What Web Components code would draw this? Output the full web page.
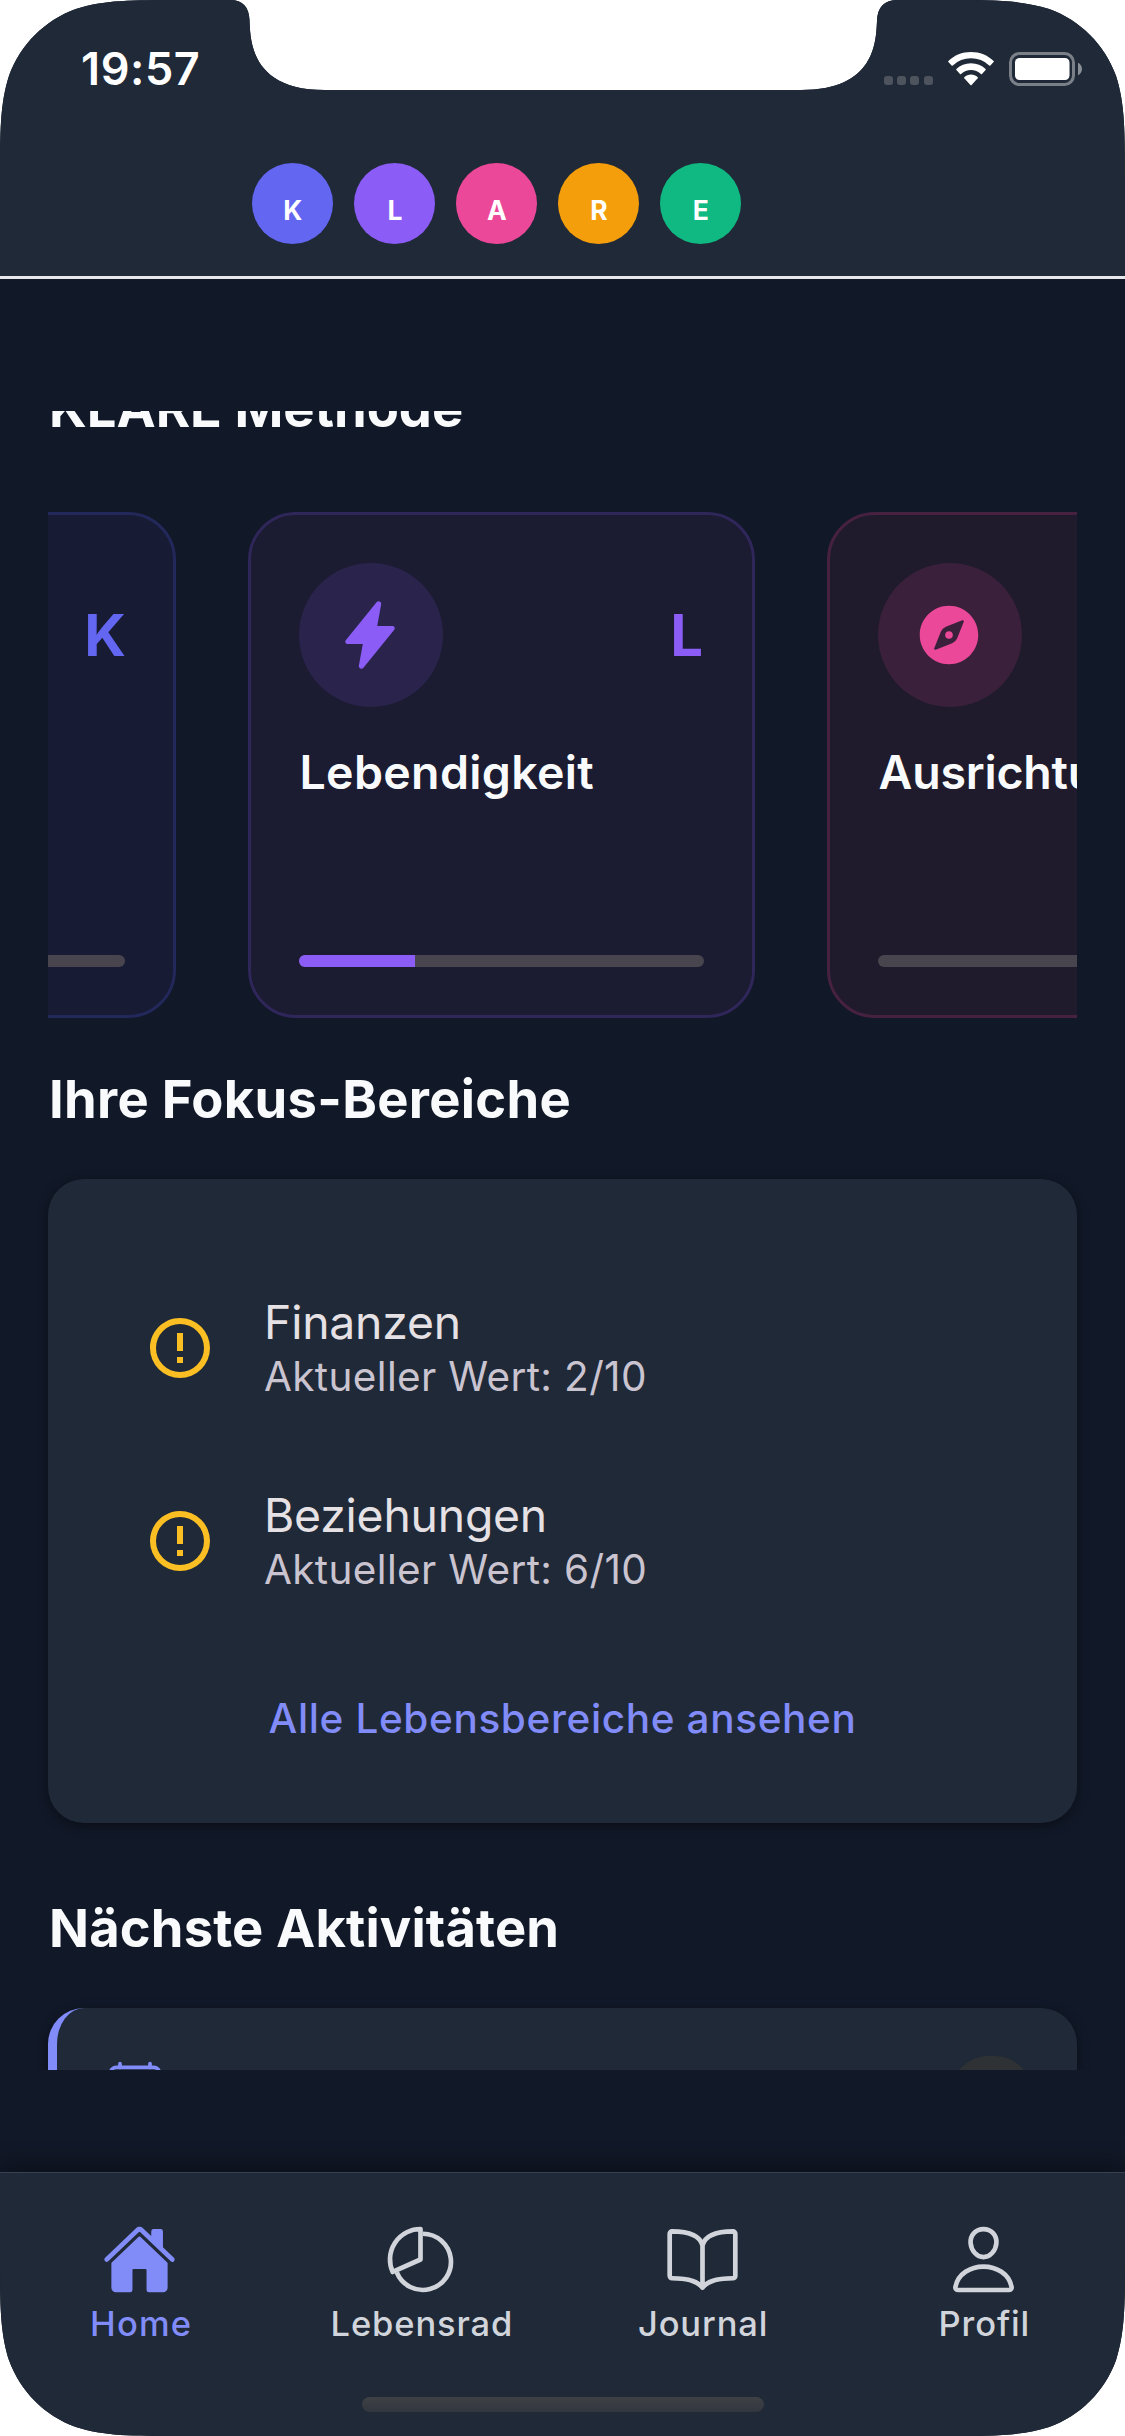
<!DOCTYPE html>
<html lang="de">
<head>
<meta charset="utf-8">
<title>KLARE Methode</title>
<style>
  html, body { margin: 0; background: #fff; }
  body { font-family: Inter, "Liberation Sans", sans-serif; }
</style>
</head>
<body>
<klare-screen>
  <status-bar slot="header" time="19:57"></status-bar>
  <klare-badges slot="header">
    <klare-badge style="--tone:#6366f1">K</klare-badge>
    <klare-badge style="--tone:#8b5cf6">L</klare-badge>
    <klare-badge style="--tone:#ec4899">A</klare-badge>
    <klare-badge style="--tone:#f59e0b">R</klare-badge>
    <klare-badge style="--tone:#10b981">E</klare-badge>
  </klare-badges>

  <section-title style="margin-top:-36px; --track:0">KLARE Methode</section-title>
  <step-carousel>
    <step-card letter="K" icon="none" progress="0" style="--tone:#6366f1; --fill:#171b34; --line:#23285a; --disc:#20254e; --kern:-1px"></step-card>
    <step-card letter="L" icon="flash" progress="28.7" style="--tone:#8b5cf6; --fill:#1b1b32; --line:#2f2659; --disc:#2a244d; --kern:1px">Lebendigkeit</step-card>
    <step-card letter="" icon="compass" progress="0" style="--tone:#ec4899; --fill:#1f1b2c; --line:#462240; --disc:#3a203b; --track:-0.2px">Ausrichtung</step-card>
  </step-carousel>

  <section-title style="margin-top:48px; --track:0.3px">Ihre Fokus-Bereiche</section-title>
  <focus-card>
    <focus-item value="2/10">Finanzen</focus-item>
    <focus-item value="6/10">Beziehungen</focus-item>
    <span slot="action">Alle Lebensbereiche ansehen</span>
  </focus-card>

  <section-title style="margin-top:71.5px; --track:0.15px">Nächste Aktivitäten</section-title>
  <activity-card></activity-card>

  <tab-bar slot="footer">
    <tab-item icon="home" active style="--track:1.2px; --shift:1px">Home</tab-item>
    <tab-item icon="pie">Lebensrad</tab-item>
    <tab-item icon="book">Journal</tab-item>
    <tab-item icon="person">Profil</tab-item>
  </tab-bar>
</klare-screen>

<script>
const define = (name, html, setup) => customElements.define(name, class extends HTMLElement {
  constructor() {
    super();
    const root = this.attachShadow({ mode: 'open' });
    const t = document.createElement('template');
    t.innerHTML = html;
    root.append(t.content.cloneNode(true));
  }
  connectedCallback() { if (setup) setup(this, this.shadowRoot); }
});

const ICONS = {
  none: '',
  flash: '<path d="M194.82 496a18.36 18.36 0 01-18.1-21.53v-.11L204.83 320H96a16 16 0 01-12.44-26.06L302.73 23a18.45 18.45 0 0132.8 13.71c0 .3-.08.59-.13.89L307.19 192H416a16 16 0 0112.44 26.06L209.24 489a18.45 18.45 0 01-14.42 7z"/>',
  compass: '<circle cx="256" cy="256" r="27"/><path fill-rule="evenodd" d="M256 48C141.31 48 48 141.31 48 256s93.31 208 208 208 208-93.31 208-208S370.69 48 256 48zm105.07 113.33l-46.88 117.2a64 64 0 01-35.66 35.66l-117.2 46.88a8 8 0 01-10.4-10.4l46.88-117.2a64 64 0 0135.66-35.66l117.2-46.88a8 8 0 0110.4 10.4z"/>',
  home: '<path d="M261.56 101.28a8 8 0 00-11.06 0L66.4 277.15a8 8 0 00-2.47 5.79L63.9 448a32 32 0 0032 32H192a16 16 0 0016-16V328a8 8 0 018-8h80a8 8 0 018 8v136a16 16 0 0016 16h96.06a32 32 0 0032-32V282.94a8 8 0 00-2.47-5.79z"/><path d="M490.91 244.15l-74.8-71.56V64a16 16 0 00-16-16h-48a16 16 0 00-16 16v32l-57.92-55.38C272.77 35.14 264.71 32 256 32c-8.68 0-16.72 3.14-22.14 8.63l-212.7 203.5c-6.22 6-7 15.87-1.34 22.37A16 16 0 0043 267.56L250.5 69.28a8 8 0 0111.06 0l207.52 198.28a16 16 0 0022.59-.44c6.14-6.36 5.63-16.86-.76-22.97z"/>',
  pie: '<g fill="none" stroke="currentColor" stroke-width="32" stroke-linejoin="round"><path d="M256 256V48a208 208 0 0 0-190 293.2z"/><path d="M272 80a192 192 0 1 1-178 264"/></g>',
  book: '<g fill="none" stroke="currentColor" stroke-width="32" stroke-linecap="round" stroke-linejoin="round"><path d="M256 160c16-63.16 76.43-95.41 208-96a15.94 15.94 0 0116 16v288a16 16 0 01-16 16c-128 0-177.45 25.81-208 64-30.37-38-80-64-208-64-9.88 0-16-8.05-16-17.93V80a15.94 15.94 0 0116-16c131.57.59 192 32.84 208 96zM256 160v288"/></g>',
  person: '<g fill="none" stroke="currentColor" stroke-width="32" stroke-linecap="round" stroke-linejoin="round"><path d="M344 144c-3.92 52.87-44 96-88 96s-84.15-43.12-88-96c-4-55 35-96 88-96s92 42 88 96z"/><path d="M256 304c-87 0-175.3 48-191.64 138.6C62.39 453.52 68.57 464 80 464h352c11.44 0 17.62-10.48 15.65-21.4C431.3 352 343 304 256 304z"/></g>',
  calendar: '<g fill="none" stroke="currentColor" stroke-width="32" stroke-linecap="round" stroke-linejoin="round"><rect x="48" y="80" width="416" height="384" rx="48"/><path d="M128 48v32M384 48v32M464 160H48"/></g>',
  alert: '<g transform="scale(21.333)"><path d="M11 15h2v2h-2v-2m0-8h2v6h-2V7m1-5C6.47 2 2 6.5 2 12a10 10 0 0 0 10 10 10 10 0 0 0 10-10A10 10 0 0 0 12 2m0 18a8 8 0 0 1-8-8 8 8 0 0 1 8-8 8 8 0 0 1 8 8 8 8 0 0 1-8 8z"/></g>'
};

define('app-icon', `
  <style>:host{display:block;flex:none} svg{display:block;width:100%;height:100%}</style>
  <svg viewBox="0 0 512 512" fill="currentColor"></svg>`,
  (el, root) => { root.querySelector('svg').innerHTML = ICONS[el.getAttribute('name')] || ''; });

define('klare-screen', `
  <style>
    :host{display:flex;flex-direction:column;width:1125px;height:2436px;background:#111827;overflow:hidden;
      clip-path:path('M0 183.4 C0 130.6 0 104.2 9 75.8 C20.3 44.7 44.7 20.3 75.8 9 C104.2 0 130.6 0 183.4 0 L230 0 C243 0 249 7 249.5 20 C250.3 40 250.5 90 325 90 L801 90 C875 90 876 42 877 21 C877.5 7 884 0 898 0 L941.6 0 C994.4 0 1020.8 0 1049.2 9 C1080.3 20.3 1104.7 44.7 1116 75.8 C1125 104.2 1125 130.6 1125 183.4 L1125 2252.6 C1125 2305.4 1125 2331.8 1116 2360.2 C1104.7 2391.3 1080.3 2415.7 1049.2 2427 C1020.8 2436 994.4 2436 941.6 2436 L183.4 2436 C130.6 2436 104.2 2436 75.8 2427 C44.7 2415.7 20.3 2391.3 9 2360.2 C0 2331.8 0 2305.4 0 2252.6 Z');}
    header{box-sizing:border-box;height:279px;flex:none;background:#1f2937;border-bottom:3px solid #e5e7eb}
    main{margin-top:132px;height:1659px;flex:none;box-sizing:border-box;padding:0 48px;overflow:hidden;display:flex;flex-direction:column}
    footer{margin-top:auto}
  </style>
  <header><slot name="header"></slot></header>
  <main><slot></slot></main>
  <footer><slot name="footer"></slot></footer>`);

define('status-bar', `
  <style>
    :host{display:flex;justify-content:space-between;align-items:flex-start;height:163.400px;box-sizing:border-box;padding:0 43px 0 81px;color:#fff}
    .time{font-weight:580;font-size:45px;line-height:54px;letter-spacing:.6px;margin-top:42px}
    .right{display:flex;align-items:flex-start;margin-top:52px}
    .dots{display:flex;gap:4px;margin:24px 15px 0 0}
    .dots i{width:9px;height:9px;margin-right:.3px;border-radius:3px;background:#4d545e}
    svg{display:block}
  </style>
  <span class="time"></span>
  <div class="right">
    <div class="dots"><i></i><i></i><i></i><i></i></div>
    <svg width="46" height="34" viewBox="0 0 46 34" fill="#fff" style="margin-right:15px">
      <path d="M23 0C31.8 0 39.8 3.3 45.6 8.9Q46.1 9.5 45.6 10L42.4 13.5Q41.8 14 41.2 13.5A26.3 26.3 0 0 0 4.8 13.5Q4.2 14 3.6 13.5L.4 10Q-.1 9.5 .4 8.9C6.200 3.300 14.200 0 23 0Z"/>
      <path d="M23 11.300C28.700 11.300 33.800 13.400 37.600 17Q38.100 17.500 37.600 18.100L34 21.900Q33.500 22.400 32.900 21.900A14.800 14.800 0 0 0 13.100 21.900Q12.500 22.400 12 21.900L8.400 18.100Q7.900 17.500 8.400 17C12.200 13.400 17.300 11.300 23 11.300Z"/>
      <path d="M23 22.600C25.600 22.600 27.900 23.600 29.700 25.200Q30.200 25.700 29.700 26.300L23.600 32.900Q23 33.500 22.400 32.900L16.300 26.300Q15.800 25.700 16.300 25.200C18.100 23.600 20.400 22.600 23 22.600Z"/>
    </svg>
    <svg width="73" height="34" viewBox="0 0 73 34">
      <rect x="1.500" y="1.500" width="63" height="31" rx="9" fill="none" stroke="#7b8088" stroke-width="3"/>
      <rect x="6" y="6" width="54.500" height="22" rx="4.500" fill="#fff"/>
      <path d="M69 10.700c2.400 1 4 3.500 4 6.300s-1.600 5.300-4 6.300z" fill="#8a8f96"/>
    </svg>
  </div>`,
  (el, root) => { root.querySelector('.time').textContent = el.getAttribute('time'); });

define('klare-badges', `<style>:host{display:flex;gap:21px;padding-left:252.400px}</style><slot></slot>`);
define('klare-badge', `
  <style>:host{display:flex;align-items:center;justify-content:center;box-sizing:border-box;width:81px;height:81px;padding-top:13px;border-radius:50%;background:var(--tone);color:#fff;font-weight:700;font-size:26.5px;line-height:34px}</style>
  <slot></slot>`);

define('section-title', `
  <style>:host{display:block;flex:none;height:66px;padding-left:1px;line-height:66px;font-size:52.5px;font-weight:660;letter-spacing:var(--track,0);color:#f9fafb;white-space:nowrap}</style>
  <slot></slot>`);

define('step-carousel', `
  <style>
    :host{display:block;flex:none;overflow:hidden;margin-top:71px;height:506px}
    .strip{display:flex;gap:72px;margin-left:-379px;height:100%}
  </style>
  <div class="strip"><slot></slot></div>`);

define('step-card', `
  <style>
    :host{display:flex;flex-direction:column;flex:none;box-sizing:border-box;width:507px;height:506px;padding:48px;border:3px solid var(--line);border-radius:48px;background:var(--fill)}
    .head{display:flex;justify-content:space-between;align-items:center;height:144px}
    .disc{display:flex;align-items:center;justify-content:center;width:144px;height:144px;border-radius:50%;background:var(--disc);color:var(--tone)}
    app-icon{width:72px;height:72px;margin-right:2px}
    .letter{color:var(--tone);font-weight:680;font-size:58px;line-height:72px;letter-spacing:var(--kern,0)}
    .name{margin-top:35px;height:60px;padding-left:.5px;line-height:60px;font-size:46.5px;font-weight:560;letter-spacing:var(--track,.33px);color:#f9fafb;white-space:nowrap}
    .bar{margin-top:auto;height:12px;border-radius:6px;background:#49454f;overflow:hidden}
    .bar i{display:block;height:100%;background:var(--tone)}
  </style>
  <div class="head"><span class="disc"><app-icon></app-icon></span><span class="letter"></span></div>
  <div class="name"><slot></slot></div>
  <div class="bar"><i></i></div>`,
  (el, root) => {
    const icon = document.createElement('app-icon');
    icon.setAttribute('name', el.getAttribute('icon'));
    root.querySelector('app-icon').replaceWith(icon);
    root.querySelector('.letter').textContent = el.getAttribute('letter');
    root.querySelector('.bar i').style.width = el.getAttribute('progress') + '%';
  });

define('focus-card', `
  <style>
    :host{display:flex;flex-direction:column;flex:none;box-sizing:border-box;height:644px;margin-top:47px;padding:114px 96px 0;border-radius:36px;background:#1f2937;box-shadow:0 3px 12px rgba(0,0,0,.4)}
    .list{display:flex;flex-direction:column;gap:85px}
    .action{margin-top:100px;text-align:center;color:#818cf8;font-weight:500;font-size:40.5px;line-height:50px;letter-spacing:.63px}
  </style>
  <div class="list"><slot></slot></div>
  <div class="action"><slot name="action"></slot></div>`);

define('focus-item', `
  <style>
    :host{display:flex;align-items:center;gap:47px;height:108px}
    app-icon{width:72px;height:72px;margin-top:2px;color:#fbbf24}
    .name{font-size:46.3px;line-height:58px;letter-spacing:-.2px;padding-left:1px;color:#e6e1e5}
    .value{font-size:40.5px;line-height:52px;margin-bottom:-2px;letter-spacing:.35px;padding-left:1px;color:#cac4d0}
  </style>
  <app-icon name="alert"></app-icon>
  <div><div class="name"><slot></slot></div><div class="value"></div></div>`,
  (el, root) => { root.querySelector('.value').textContent = 'Aktueller Wert: ' + el.getAttribute('value'); });

define('activity-card', `
  <style>
    :host{display:flex;justify-content:space-between;align-items:flex-start;flex:none;box-sizing:border-box;height:300px;margin-top:47.500px;padding:48px 46px 0 48px;border-left:9px solid #818cf8;border-radius:36px;background:#1f2937;box-shadow:0 3px 12px rgba(0,0,0,.4)}
    app-icon{width:60px;height:60px;margin-top:2px;color:#818cf8}
    .chip{width:79px;height:72px;border-radius:36px;background:#2f3234}
  </style>
  <app-icon name="calendar"></app-icon><span class="chip"></span>`);

define('tab-bar', `
  <style>
    :host{display:flex;flex-direction:column;align-items:center;box-sizing:border-box;height:264px;padding-top:49px;background:#1f2937;border-top:1px solid #374151;box-shadow:0 -4px 24px rgba(0,0,0,.4)}
    nav{display:flex;align-self:stretch}
    .grip{width:402px;height:15px;margin-top:52px;border-radius:7.500px;background:linear-gradient(#3e4144,#32373f)}
  </style>
  <nav><slot></slot></nav>
  <div class="grip"></div>`);

define('tab-item', `
  <style>
    :host{display:flex;flex-direction:column;align-items:center;gap:6px;flex:1;color:#d1d5db}
    :host([active]){color:#818cf8}
    app-icon{width:75px;height:75px;margin-right:2px}
    .label{font-size:34.500px;font-weight:480;line-height:42px;letter-spacing:var(--track,.88px);padding-left:var(--shift,0)}
  </style>
  <app-icon></app-icon><span class="label"><slot></slot></span>`,
  (el, root) => {
    const icon = document.createElement('app-icon');
    icon.setAttribute('name', el.getAttribute('icon'));
    root.querySelector('app-icon').replaceWith(icon);
  });
</script>
</body>
</html>
